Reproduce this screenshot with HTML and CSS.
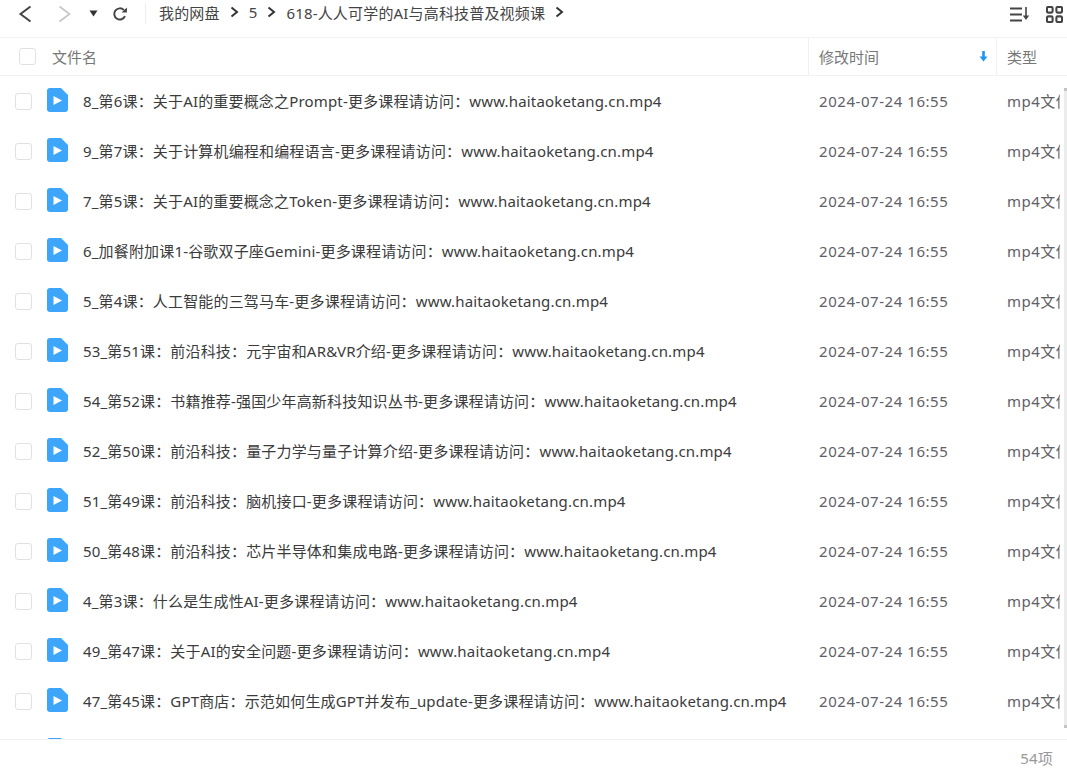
FILE: index.html
```html
<!DOCTYPE html>
<html lang="zh">
<head>
    <meta charset="UTF-8">
    <title>618-人人可学的AI与高科技普及视频课</title>
    <link rel="stylesheet" href="styles.css">
</head>
<body>
<svg class="defs" width="0" height="0">
    <symbol id="video" viewBox="0 0 21 24">
        <path d="M3 0h11l7 7v14a3 3 0 0 1-3 3H3a3 3 0 0 1-3-3V3a3 3 0 0 1 3-3z" fill="#3da6fb"/>
        <path d="M6.500 8 15 12.500 6.500 17z" fill="#fff"/>
    </symbol>
    <symbol id="crumb" viewBox="0 0 9 12">
        <path d="M1.500 1.500 7 6l-5.500 4.500" fill="none" stroke="#333" stroke-width="2"/>
    </symbol>
</svg>
<div class="app">
    <div class="toolbar">
        <svg class="tool-back" width="16" height="18" viewBox="0 0 16 18"><path d="M13.500 1.500 3.500 9l10 7.500" fill="none" stroke="#444" stroke-width="2"/></svg>
        <svg class="tool-next" width="16" height="18" viewBox="0 0 16 18"><path d="M3.500 1.500 13.500 9l-10 7.500" fill="none" stroke="#c4c4c4" stroke-width="1.600"/></svg>
        <svg class="tool-drop" width="9" height="7" viewBox="0 0 9 7"><path d="M0.500 0.500h8L4.500 6.500z" fill="#333"/></svg>
        <svg class="tool-refresh" width="16" height="16" viewBox="0 0 18 18"><path d="M14.600 11.500A6.300 6.300 0 1 1 13.400 4.600" fill="none" stroke="#444" stroke-width="2.200"/><path d="M10.800 7.200h6V1.800z" fill="#444"/></svg>
        <div class="tool-sep"></div>
        <div class="crumbs">
            <span>我的网盘</span>
            <svg class="crumb-arrow" width="9" height="12"><use href="#crumb"/></svg>
            <span>5</span>
            <svg class="crumb-arrow" width="9" height="12"><use href="#crumb"/></svg>
            <span>618-人人可学的AI与高科技普及视频课</span>
            <svg class="crumb-arrow" width="9" height="12"><use href="#crumb"/></svg>
        </div>
        <div class="tool-right">
            <svg width="20" height="15" viewBox="0 0 20 15"><path d="M0 1.500h12M0 7.500h12M0 13.500h12" stroke="#444" stroke-width="2"/><path d="M16 0v9" stroke="#444" stroke-width="1.600"/><path d="M12.800 8.500h6.400L16 13z" fill="#444"/></svg>
            <svg width="17" height="17" viewBox="0 0 18 18"><g fill="none" stroke="#444" stroke-width="2.200"><rect x="1" y="1" width="6" height="6" rx="1.500"/><rect x="11" y="1" width="6" height="6" rx="1.500"/><rect x="1" y="11" width="6" height="6" rx="1.500"/><rect x="11" y="11" width="6" height="6" rx="1.500"/></g></svg>
        </div>
    </div>

    <div class="head">
        <div class="col-name head-name"><span class="check head-check"></span>文件名</div>
        <div class="col-time head-time">修改时间
            <svg width="9" height="11" viewBox="0 0 9 11"><path d="M4.500 0v6" stroke="#1a96f5" stroke-width="2.600"/><path d="M0.500 5.500h8L4.500 10.500z" fill="#1a96f5"/></svg>
        </div>
        <div class="col-type">类型</div>
    </div>

    <div class="list">
        <div class="row">
            <span class="check"></span>
            <svg class="file-icon" width="21" height="24"><use href="#video"/></svg>
            <span class="name">8_第6课：关于AI的重要概念之Prompt-更多课程请访问：www.haitaoketang.cn.mp4</span>
            <span class="time">2024-07-24 16:55</span>
            <span class="type">mp4文件</span>
        </div>
        <div class="row">
            <span class="check"></span>
            <svg class="file-icon" width="21" height="24"><use href="#video"/></svg>
            <span class="name">9_第7课：关于计算机编程和编程语言-更多课程请访问：www.haitaoketang.cn.mp4</span>
            <span class="time">2024-07-24 16:55</span>
            <span class="type">mp4文件</span>
        </div>
        <div class="row">
            <span class="check"></span>
            <svg class="file-icon" width="21" height="24"><use href="#video"/></svg>
            <span class="name">7_第5课：关于AI的重要概念之Token-更多课程请访问：www.haitaoketang.cn.mp4</span>
            <span class="time">2024-07-24 16:55</span>
            <span class="type">mp4文件</span>
        </div>
        <div class="row">
            <span class="check"></span>
            <svg class="file-icon" width="21" height="24"><use href="#video"/></svg>
            <span class="name">6_加餐附加课1-谷歌双子座Gemini-更多课程请访问：www.haitaoketang.cn.mp4</span>
            <span class="time">2024-07-24 16:55</span>
            <span class="type">mp4文件</span>
        </div>
        <div class="row">
            <span class="check"></span>
            <svg class="file-icon" width="21" height="24"><use href="#video"/></svg>
            <span class="name">5_第4课：人工智能的三驾马车-更多课程请访问：www.haitaoketang.cn.mp4</span>
            <span class="time">2024-07-24 16:55</span>
            <span class="type">mp4文件</span>
        </div>
        <div class="row">
            <span class="check"></span>
            <svg class="file-icon" width="21" height="24"><use href="#video"/></svg>
            <span class="name">53_第51课：前沿科技：元宇宙和AR&amp;VR介绍-更多课程请访问：www.haitaoketang.cn.mp4</span>
            <span class="time">2024-07-24 16:55</span>
            <span class="type">mp4文件</span>
        </div>
        <div class="row">
            <span class="check"></span>
            <svg class="file-icon" width="21" height="24"><use href="#video"/></svg>
            <span class="name">54_第52课：书籍推荐-强国少年高新科技知识丛书-更多课程请访问：www.haitaoketang.cn.mp4</span>
            <span class="time">2024-07-24 16:55</span>
            <span class="type">mp4文件</span>
        </div>
        <div class="row">
            <span class="check"></span>
            <svg class="file-icon" width="21" height="24"><use href="#video"/></svg>
            <span class="name">52_第50课：前沿科技：量子力学与量子计算介绍-更多课程请访问：www.haitaoketang.cn.mp4</span>
            <span class="time">2024-07-24 16:55</span>
            <span class="type">mp4文件</span>
        </div>
        <div class="row">
            <span class="check"></span>
            <svg class="file-icon" width="21" height="24"><use href="#video"/></svg>
            <span class="name">51_第49课：前沿科技：脑机接口-更多课程请访问：www.haitaoketang.cn.mp4</span>
            <span class="time">2024-07-24 16:55</span>
            <span class="type">mp4文件</span>
        </div>
        <div class="row">
            <span class="check"></span>
            <svg class="file-icon" width="21" height="24"><use href="#video"/></svg>
            <span class="name">50_第48课：前沿科技：芯片半导体和集成电路-更多课程请访问：www.haitaoketang.cn.mp4</span>
            <span class="time">2024-07-24 16:55</span>
            <span class="type">mp4文件</span>
        </div>
        <div class="row">
            <span class="check"></span>
            <svg class="file-icon" width="21" height="24"><use href="#video"/></svg>
            <span class="name">4_第3课：什么是生成性AI-更多课程请访问：www.haitaoketang.cn.mp4</span>
            <span class="time">2024-07-24 16:55</span>
            <span class="type">mp4文件</span>
        </div>
        <div class="row">
            <span class="check"></span>
            <svg class="file-icon" width="21" height="24"><use href="#video"/></svg>
            <span class="name">49_第47课：关于AI的安全问题-更多课程请访问：www.haitaoketang.cn.mp4</span>
            <span class="time">2024-07-24 16:55</span>
            <span class="type">mp4文件</span>
        </div>
        <div class="row">
            <span class="check"></span>
            <svg class="file-icon" width="21" height="24"><use href="#video"/></svg>
            <span class="name">47_第45课：GPT商店：示范如何生成GPT并发布_update-更多课程请访问：www.haitaoketang.cn.mp4</span>
            <span class="time">2024-07-24 16:55</span>
            <span class="type">mp4文件</span>
        </div>
        <div class="row">
            <span class="check"></span>
            <svg class="file-icon" width="21" height="24"><use href="#video"/></svg>
        </div>
    </div>

    <div class="foot">54项</div>
    <div class="scrollbar"></div>
</div>
</body>
</html>
```

FILE: styles.css
```css
html,
body {
    margin: 0;
    height: 100%;
    overflow: hidden;
}

body {
    background: #fff;
    color: #3b3b3b;
    font-family: "Noto Sans", "Noto Sans CJK SC", sans-serif;
    font-size: 15px;
}

.defs {
    position: absolute;
}

.app {
    display: flex;
    flex-direction: column;
    height: 776px;
}

.toolbar {
    display: flex;
    align-items: center;
    height: 26px;
    padding-bottom: 11px;
    border-bottom: 1px solid #f3f3f3;
}

.tool-back {
    margin-top: 2px;
    margin-left: 17px;
}

.tool-next {
    margin-top: 2px;
    margin-left: 23px;
}

.tool-drop {
    margin-left: 17px;
}

.tool-refresh {
    margin-top: 2px;
    margin-left: 14px;
}

.tool-sep {
    width: 1px;
    height: 21px;
    margin: 0 13px 0 17px;
    background: #eee;
}

.crumbs {
    display: flex;
    align-items: center;
    margin-bottom: 2px;
    color: #444;
    letter-spacing: 0.17px;
}

.crumb-arrow {
    margin: 0 10px 0 10px;
}

.tool-right {
    display: flex;
    align-items: center;
    gap: 16px;
    margin-top: 2px;
    margin-left: auto;
    margin-right: 4px;
}

.head {
    display: flex;
    height: 37px;
    color: #777;
    border-bottom: 1px solid #f3f3f3;
}

.col-name {
    width: 808px;
    border-right: 1px solid #f1f1f1;
}

.head-name {
    display: flex;
    align-items: center;
}

.head-check {
    margin-left: 19px;
    margin-right: 16px;
    border-color: #e8e8e8;
}

.col-time {
    width: 188px;
    padding-right: 8px;
    padding-left: 10px;
    box-sizing: border-box;
    border-right: 1px solid #f1f1f1;
}

.head-time {
    display: flex;
    align-items: center;
    justify-content: space-between;
}

.col-type {
    display: flex;
    align-items: center;
    padding-left: 10px;
}

.check {
    flex: none;
    width: 15px;
    height: 15px;
    background: #fff;
    border: 1px solid #dfe1e5;
    border-radius: 3px;
}

.list {
    flex: 1;
    overflow: hidden;
}

.row {
    display: flex;
    align-items: center;
    height: 50px;
    white-space: nowrap;
}

.row .check {
    margin-left: 15px;
}

.file-icon {
    flex: none;
    margin-left: 15px;
    margin-bottom: 2px;
}

.name {
    width: 736px;
    margin-left: 15px;
    margin-bottom: 2px;
    overflow: hidden;
    letter-spacing: 0.17px;
}

.time {
    width: 188px;
    color: #5f6066;
    letter-spacing: 0.55px;
}

.type {
    width: 53px;
    margin-bottom: 2px;
    color: #5f6066;
    letter-spacing: 0.5px;
    overflow: hidden;
}

.foot {
    height: 36px;
    line-height: 37px;
    padding-right: 14px;
    color: #999;
    letter-spacing: 0.2px;
    text-align: right;
    border-top: 1px solid #f3f3f3;
}

/* thin overlay scrollbar on the list */
.scrollbar {
    position: absolute;
    top: 88px;
    right: 0;
    width: 3px;
    height: 640px;
    background: #ececec;
    border-top: 3px solid #c4c4c4;
    border-bottom: 3px solid #c4c4c4;
    box-sizing: border-box;
}
```
